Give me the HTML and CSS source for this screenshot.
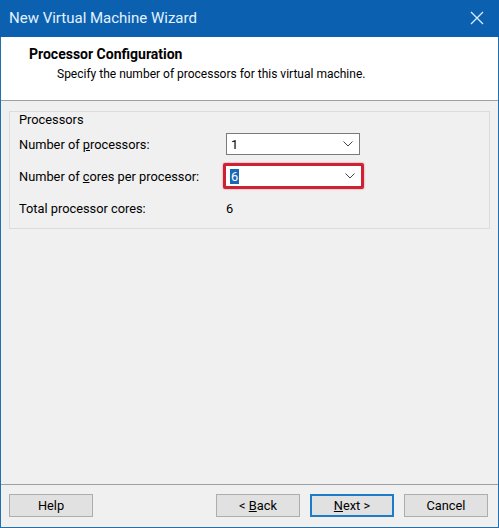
FILE: index.html
```html
<!DOCTYPE html>
<html>
<head>
<meta charset="utf-8">
	<title>New Virtual Machine Wizard</title>
	<link rel="stylesheet" href="styles.css">
</head>
<body>

<div class="window">
	<div class="titlebar">
		<span class="title">New Virtual Machine Wizard</span>
		<svg class="close" width="16" height="16" viewBox="0 0 16 16">
			<path d="M2 2 L14 14 M14 2 L2 14" stroke="#dbeeff" stroke-width="1.3" fill="none"/>
		</svg>
	</div>
	<div class="header">
		<div class="head-title">Processor Configuration</div>
		<div class="head-sub">Specify the number of processors for this virtual machine.</div>
	</div>
	<div class="content">
		<div class="group">
			<div class="legend">Processors</div>
			<div class="row">
				<span class="label">Number of <u>p</u>rocessors:</span>
				<div class="combo">
					<span class="value">1</span>
					<svg class="arrow" width="10" height="6" viewBox="0 0 10 6"><path d="M0.5 0.5 L5 5 L9.5 0.5" stroke="#444" fill="none"/></svg>
				</div>
			</div>
			<div class="row">
				<span class="label">Number of <u>c</u>ores per processor:</span>
				<div class="highlight">
					<div class="combo inner">
						<span class="value sel">6</span>
						<svg class="arrow" width="10" height="6" viewBox="0 0 10 6"><path d="M0.5 0.5 L5 5 L9.5 0.5" stroke="#444" fill="none"/></svg>
					</div>
				</div>
			</div>
			<div class="row total">
				<span class="label">Total processor cores:</span>
				<span class="total-val">6</span>
			</div>
		</div>
	</div>
	<div class="footer">
		<button class="btn">Help</button>
		<div class="spacer"></div>
		<button class="btn">&lt; <u>B</u>ack</button>
		<button class="btn default"><u>N</u>ext &gt;</button>
		<button class="btn">Cancel</button>
	</div>
</div>

</body>
</html>
```
FILE: styles.css
```css
body{
	margin: 0;
	font-family: Roboto, "Noto Sans", sans-serif;
	font-size: 12px;
	color: #000;
}
.window{
	width: 499px;
	height: 528px;
	box-sizing: border-box;
	border: 1px solid #1f6fb2;
	border-top: none;
	background: #f0f0f0;
	display: flex;
	flex-direction: column;
}
.titlebar{
	height: 37px;
	background: #0b61b0;
	margin: 0 -1px;
	display: flex;
	align-items: center;
	padding: 0 14px 0 9px;
}
.title{
	flex: 1;
	color: #e4f2ff;
	font-size: 15px;
	padding-bottom: 2px;
}
.close{
	margin-bottom: 1px;
}
.header{
	height: 63px;
	background: #fff;
	border-bottom: 1px solid #a0a0a0;
	box-sizing: content-box;
}
.head-title{
	font-weight: bold;
	font-size: 14px;
	padding: 9px 0 0 28px;
}
.head-sub{
	padding: 5px 0 0 56px;
}
.content{
	flex: 1;
	padding: 10px 8px 0 8px;
	font-size: 12.8px;
}
.group{
	border: 1px solid #dcdcdc;
	height: 118px;
	box-sizing: border-box;
	padding: 0 10px 0 9px;
}
.legend{
	line-height: 16px;
}
.row{
	display: flex;
	align-items: center;
	height: 32px;
}
.row .label{
	width: 207px;
}
.combo{
	width: 134px;
	height: 22px;
	box-sizing: border-box;
	border: 1px solid #7a7a7a;
	background: #fff;
	display: flex;
	align-items: center;
	padding: 0 6px 0 4px;
}
.combo .value{
	flex: 1;
}
.highlight{
	margin-left: -3px;
	border: 3px solid #cc2233;
	border-radius: 2px;
	box-shadow: 0 0 2px #e07080;
}
.combo.inner{
	border: none;
	width: 135px;
	height: 20px;
}
.sel{
	flex: none !important;
	background: #1868b8;
	color: #fff;
	padding: 0 1px;
	margin-right: auto;
	line-height: 15px;
}
.combo.inner .arrow{
	margin-left: auto;
}
.row.total{
	height: 32px;
}
.footer{
	height: 40px;
	border-top: 1px solid #a0a0a0;
	display: flex;
	align-items: center;
	padding: 0 10px 2px 8px;
	gap: 10px;
}
.spacer{
	flex: 1;
}
.btn{
	width: 84px;
	height: 23px;
	font-family: inherit;
	font-size: 12.8px;
	background: #e1e1e1;
	border: 1px solid #adadad;
	padding: 0;
	color: #000;
}
.btn.default{
	border: 2px solid #1e7bc8;
}
```
